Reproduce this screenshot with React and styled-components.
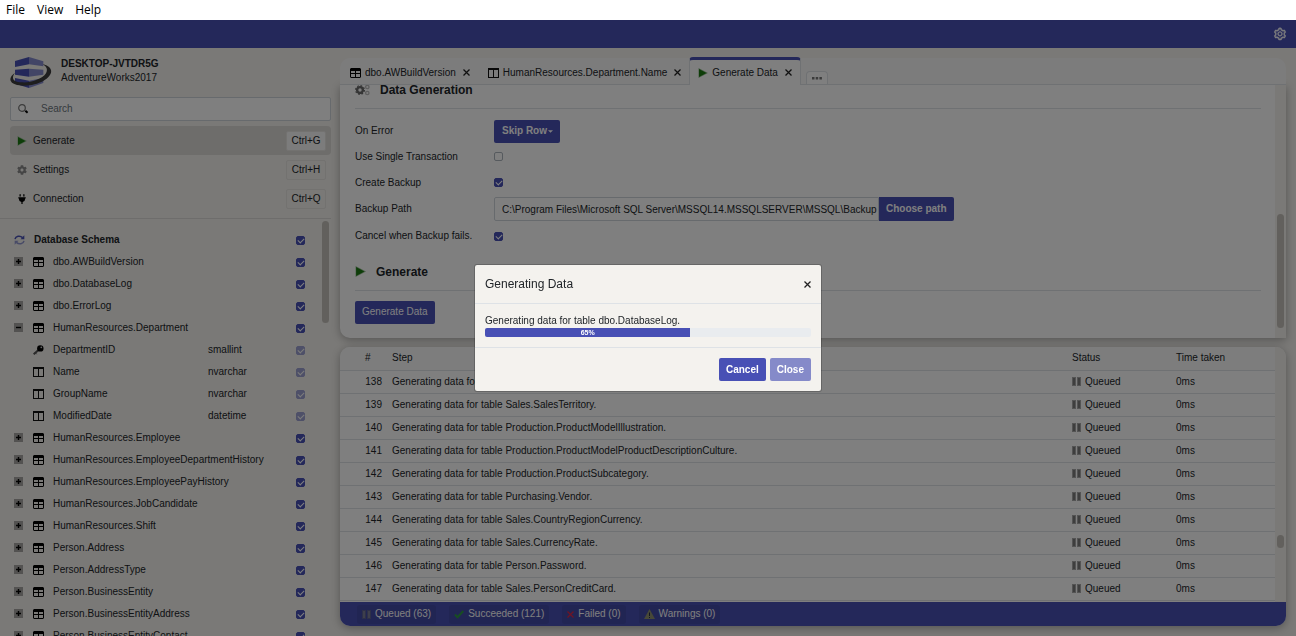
import React from 'react'
import styled, { createGlobalStyle } from 'styled-components'
import { AiOutlineSetting } from 'react-icons/ai'
import { FaCog, FaPlug } from 'react-icons/fa'

const tables = [
    { name: 'dbo.AWBuildVersion' },
    { name: 'dbo.DatabaseLog' },
    { name: 'dbo.ErrorLog' },
    {
        name: 'HumanResources.Department',
        columns: [
            { name: 'DepartmentID', type: 'smallint', primary: true },
            { name: 'Name', type: 'nvarchar' },
            { name: 'GroupName', type: 'nvarchar' },
            { name: 'ModifiedDate', type: 'datetime' },
        ],
    },
    { name: 'HumanResources.Employee' },
    { name: 'HumanResources.EmployeeDepartmentHistory' },
    { name: 'HumanResources.EmployeePayHistory' },
    { name: 'HumanResources.JobCandidate' },
    { name: 'HumanResources.Shift' },
    { name: 'Person.Address' },
    { name: 'Person.AddressType' },
    { name: 'Person.BusinessEntity' },
    { name: 'Person.BusinessEntityAddress' },
    { name: 'Person.BusinessEntityContact' },
]

const steps = [
    { id: 138, table: 'Sales.SpecialOffer' },
    { id: 139, table: 'Sales.SalesTerritory' },
    { id: 140, table: 'Production.ProductModelIllustration' },
    { id: 141, table: 'Production.ProductModelProductDescriptionCulture' },
    { id: 142, table: 'Production.ProductSubcategory' },
    { id: 143, table: 'Purchasing.Vendor' },
    { id: 144, table: 'Sales.CountryRegionCurrency' },
    { id: 145, table: 'Sales.CurrencyRate' },
    { id: 146, table: 'Person.Password' },
    { id: 147, table: 'Sales.PersonCreditCard' },
]

const progress = { label: '65%', filled: 63 }

function Logo() {
    return (
        <svg width="42" height="33" viewBox="0 0 126 99">
            <path fill="#4850b5" d="M15 15 57 3v22L15 33zM15 41l42-3v24l-42-6zM15 66l42 8v22L15 83z" />
            <path fill="#858bcc" d="M57 3l43 13v15L57 25zM57 38l43 3v15l-43 6zM57 74l43-8v15L57 96z" />
            <path
                fill="#3c3c3c"
                d="M15 50C-8 66-4 88 38 89 90 90 128 62 123 43 121 33 109 27 98 25c12 7 16 14 10 27C97 70 60 81 36 79 8 78 3 66 15 50z"
            />
        </svg>
    )
}

function TableIcon() {
    return (
        <svg width="11" height="10" viewBox="0 0 11 10">
            <path fill="#000" fillRule="evenodd" d="M1 0h9l1 1v8l-1 1H1L0 9V1zM1 3v2h4V3zM6 3v2h4V3zM1 6v3h4V6zM6 6v3h4V6z" />
        </svg>
    )
}

function ColumnIcon() {
    return (
        <svg width="11" height="10" viewBox="0 0 11 10">
            <path fill="#111" fillRule="evenodd" d="M0 0h11v10H0zM1 2v7h4V2zM6 2v7h4V2z" />
        </svg>
    )
}

function KeyIcon() {
    return (
        <svg width="11" height="10" viewBox="0 0 11 10">
            <path stroke="#555" strokeWidth="2" d="M.7 9.3 6 4.5" />
            <path stroke="#555" strokeWidth="1" d="M2 7.5l1.6 1.7" />
            <circle cx="7.3" cy="3.4" r="3.2" fill="#000" />
            <circle cx="8.3" cy="2.3" r=".9" fill="#ccc" />
        </svg>
    )
}

function PlayIcon({ size = 10 }) {
    return (
        <svg width={size} height={size} viewBox="0 0 10 10">
            <path fill="#9bbf98" d="M.5 0 10 5 .5 10z" />
            <path fill="#1c7a12" d="M1 1 8.6 5 1 9z" />
        </svg>
    )
}

function PauseIcon({ color = '#a8a8a8', inner = '#7c7c7c' }) {
    return (
        <svg width="9" height="9" viewBox="0 0 9 9">
            <path fill={color} d="M0 0h4v9H0zM5 0h4v9H5z" />
            <path fill={inner} d="M1 1h2v7H1zM6 1h2v7H6z" />
        </svg>
    )
}

function CrossIcon({ size = 7, color = '#222' }) {
    return (
        <svg width={size} height={size} viewBox="0 0 7 7">
            <path stroke={color} strokeWidth="1.3" d="M.5.5l6 6M6.5.5l-6 6" />
        </svg>
    )
}

function ToggleIcon({ open }) {
    return (
        <svg width="10" height="10" viewBox="0 0 10 10">
            <path fill="#a6a5a2" d="M0 0h9v9H0z" />
            <path stroke="#000" strokeWidth="1.4" d={open ? 'M2 4.5h5' : 'M2 4.5h5M4.5 2v5'} />
        </svg>
    )
}

function SearchIcon() {
    return (
        <svg width="11" height="10" viewBox="0 0 11 10" fill="none">
            <circle cx="4" cy="4" r="3.3" stroke="#777" strokeWidth="1.2" />
            <path stroke="#777" strokeWidth="1" d="M6.3 6.2l1.2 1" />
            <path stroke="#000" strokeWidth="2" d="M7.4 6.8l2.2 2" />
        </svg>
    )
}

function RefreshIcon() {
    return (
        <svg width="11" height="10" viewBox="0 0 11 10" fill="none">
            <path stroke="#4850b5" strokeWidth="1.5" d="M1 4.2C1.6 1 6 .2 8.6 2.6" />
            <path fill="#4850b5" d="M10.3.3v4H6.5z" />
            <path stroke="#9196cf" strokeWidth="1.5" d="M10 5.8C9.4 9 5 9.8 2.4 7.4" />
            <path fill="#9196cf" d="M.7 9.7v-4h3.8z" />
        </svg>
    )
}

function CogsIcon() {
    return (
        <svg width="15" height="12" viewBox="0 0 15 12" fill="none">
            <circle cx="5" cy="6" r="2.9" stroke="#6a6a6a" strokeWidth="2.4" />
            <circle cx="5" cy="6" r="4.4" stroke="#6a6a6a" strokeWidth="1.2" strokeDasharray="1.73 1.72" />
            <circle cx="12.3" cy="3" r="1.7" stroke="#bcbcbc" strokeWidth="1.3" />
            <circle cx="12.3" cy="9" r="1.7" stroke="#bcbcbc" strokeWidth="1.3" />
        </svg>
    )
}

function CheckIcon() {
    return (
        <svg width="10" height="9" viewBox="0 0 10 9" fill="none">
            <path stroke="#2f9a45" strokeWidth="2" d="M1 4.5l2.5 2.8L9.3 1" />
        </svg>
    )
}

function WarningIcon() {
    return (
        <svg width="11" height="10" viewBox="0 0 11 10">
            <path fill="#8e9070" d="M5.5 0 11 10H0z" />
            <path fill="#2b2d3d" d="M5 3.5h1V7H5zM5 8h1v1H5z" />
        </svg>
    )
}

function ScrollBar({ start, size, rest }) {
    return (
        <Track $start={start} $size={size} $rest={rest}>
            <Thumb />
        </Track>
    )
}

function Sidebar() {
    return (
        <Side>
            <Server>
                <Logo />
                <ServerText>
                    <b>DESKTOP-JVTDR5G</b>
                    <span>AdventureWorks2017</span>
                </ServerText>
            </Server>
            <SearchBox>
                <SearchIcon />
                <input type="text" placeholder="Search" aria-label="Search" />
            </SearchBox>
            <Menu>
                <MenuItem $active>
                    <PlayIcon />
                    Generate
                    <kbd>Ctrl+G</kbd>
                </MenuItem>
                <MenuItem>
                    <FaCog size={10} color="#8a8a8a" />
                    Settings
                    <kbd>Ctrl+H</kbd>
                </MenuItem>
                <MenuItem>
                    <FaPlug size={10} color="#000" />
                    Connection
                    <kbd>Ctrl+Q</kbd>
                </MenuItem>
            </Menu>
            <Schema>
                <Tree>
                    <TreeRow>
                        <RefreshIcon />
                        <b>Database Schema</b>
                        <CheckBox type="checkbox" defaultChecked aria-label="Database Schema" />
                    </TreeRow>
                    {tables.map((table) => (
                        <React.Fragment key={table.name}>
                            <TreeRow>
                                <Toggle aria-label={'Toggle ' + table.name}>
                                    <ToggleIcon open={!!table.columns} />
                                </Toggle>
                                <TableIcon />
                                <span>{table.name}</span>
                                <CheckBox type="checkbox" defaultChecked aria-label={table.name} />
                            </TreeRow>
                            {table.columns && table.columns.map((column) => (
                                <TreeRow key={column.name} $nested>
                                    {column.primary ? <KeyIcon /> : <ColumnIcon />}
                                    <ColumnName>{column.name}</ColumnName>
                                    <span>{column.type}</span>
                                    <CheckBox type="checkbox" defaultChecked disabled aria-label={column.name} />
                                </TreeRow>
                            ))}
                        </React.Fragment>
                    ))}
                </Tree>
                <ScrollBar start={2} size={102} rest={313} />
            </Schema>
        </Side>
    )
}

function GeneratePanel() {
    return (
        <TopPanel>
            <Tabs>
                <Tab>
                    <TableIcon />
                    dbo.AWBuildVersion
                    <CloseButton aria-label="Close tab"><CrossIcon /></CloseButton>
                </Tab>
                <Tab>
                    <ColumnIcon />
                    HumanResources.Department.Name
                    <CloseButton aria-label="Close tab"><CrossIcon /></CloseButton>
                </Tab>
                <Tab $active>
                    <PlayIcon />
                    Generate Data
                    <CloseButton aria-label="Close tab"><CrossIcon /></CloseButton>
                </Tab>
                <MoreTabs aria-label="More tabs">
                    <svg width="10" height="3" viewBox="0 0 10 3">
                        <path fill="#777" d="M0 0h2.5v2.5H0zM3.7 0h2.5v2.5H3.7zM7.4 0h2.5v2.5H7.4z" />
                    </svg>
                </MoreTabs>
            </Tabs>
            <PanelBody>
                <Form>
                    <Heading><CogsIcon />Data Generation</Heading>
                    <FormRow $size="button">
                        <label htmlFor="onError">On Error</label>
                        <SelectBox>
                            <select id="onError">
                                <option>Skip Row</option>
                            </select>
                            <svg width="5" height="3" viewBox="0 0 6 3"><path fill="#fff" d="M0 0h6L3 3z" /></svg>
                        </SelectBox>
                    </FormRow>
                    <FormRow>
                        <label htmlFor="transaction">Use Single Transaction</label>
                        <CheckBox id="transaction" type="checkbox" />
                    </FormRow>
                    <FormRow>
                        <label htmlFor="backup">Create Backup</label>
                        <CheckBox id="backup" type="checkbox" defaultChecked />
                    </FormRow>
                    <FormRow $size="field">
                        <label htmlFor="path">Backup Path</label>
                        <PathInput
                            id="path"
                            type="text"
                            defaultValue="C:\Program Files\Microsoft SQL Server\MSSQL14.MSSQLSERVER\MSSQL\Backup"
                        />
                        <PathButton>Choose path</PathButton>
                    </FormRow>
                    <FormRow $size="field">
                        <label htmlFor="cancelBackup">Cancel when Backup fails.</label>
                        <CheckBox id="cancelBackup" type="checkbox" defaultChecked />
                    </FormRow>
                    <Heading $spaced><PlayIcon size={11} />Generate</Heading>
                    <Button $plain>Generate Data</Button>
                </Form>
                <ScrollBar start={129} size={114} rest={10} />
            </PanelBody>
        </TopPanel>
    )
}

function StepsPanel() {
    return (
        <BottomPanel>
            <StepsBody>
                <TableWrap>
                    <StepTable>
                        <thead>
                            <tr>
                                <th>#</th>
                                <th>Step</th>
                                <th>Status</th>
                                <th>Time taken</th>
                            </tr>
                        </thead>
                        <tbody>
                            {steps.map((step) => (
                                <tr key={step.id}>
                                    <td>{step.id}</td>
                                    <td>Generating data for table {step.table}.</td>
                                    <td><Status><PauseIcon />Queued</Status></td>
                                    <td>0ms</td>
                                </tr>
                            ))}
                        </tbody>
                    </StepTable>
                </TableWrap>
                <ScrollBar start={188} size={13} rest={54} />
            </StepsBody>
            <Summary>
                <Badge><PauseIcon color="#5d6090" inner="#7c7e98" />Queued (63)</Badge>
                <Badge><CheckIcon />Succeeded (121)</Badge>
                <Badge><CrossIcon color="#dc2848" />Failed (0)</Badge>
                <Badge><WarningIcon />Warnings (0)</Badge>
            </Summary>
        </BottomPanel>
    )
}

function ProgressModal() {
    return (
        <Overlay>
            <Modal role="dialog" aria-labelledby="modalTitle">
                <ModalHeader>
                    <h2 id="modalTitle">Generating Data</h2>
                    <CloseButton aria-label="Close dialog"><CrossIcon /></CloseButton>
                </ModalHeader>
                <ModalBody>
                    <p>Generating data for table dbo.DatabaseLog.</p>
                    <Bar>
                        <BarFill style={{ width: progress.filled + '%' }}>{progress.label}</BarFill>
                    </Bar>
                </ModalBody>
                <ModalFooter>
                    <Button>Cancel</Button>
                    <Button disabled>Close</Button>
                </ModalFooter>
            </Modal>
        </Overlay>
    )
}

function App() {
    return (
        <Page>
            <GlobalStyle />
            <MenuBar>
                <button>File</button>
                <button>View</button>
                <button>Help</button>
            </MenuBar>
            <TopBar>
                <IconButton aria-label="Settings">
                    <AiOutlineSetting size={14} stroke="currentColor" strokeWidth={30} />
                </IconButton>
            </TopBar>
            <Content>
                <Sidebar />
                <Main>
                    <GeneratePanel />
                    <StepsPanel />
                </Main>
            </Content>
            <ProgressModal />
        </Page>
    )
}

export default App


const GlobalStyle = createGlobalStyle`
    * {
        box-sizing: border-box;
    }
    body {
        margin: 0;
        background: #f4f2ee;
        color: #212529;
        font-family: "Liberation Sans", Arial, sans-serif;
        font-size: 10px;
        line-height: 14px;
    }
    button, input, select {
        font: inherit;
        color: inherit;
    }
    svg {
        flex: none;
        display: block;
    }
`

const Page = styled.div`
    display: flex;
    flex-direction: column;
    height: 100vh;
    overflow: hidden;
`

const MenuBar = styled.div`
    display: flex;
    flex: none;
    height: 20px;
    background: #fff;

    button {
        padding: 0 6px;
        border: none;
        background: none;
        color: #000;
        font-family: "Open Sans", "Noto Sans", sans-serif;
        font-size: 12px;
    }
`

const TopBar = styled.div`
    display: flex;
    flex: none;
    align-items: center;
    justify-content: flex-end;
    height: 28px;
    padding: 0 9px;
    background: #4850b5;
`

const IconButton = styled.button`
    padding: 0;
    border: none;
    background: none;
    color: #fff;
`

const Content = styled.div`
    display: flex;
    flex: 1;
    min-height: 0;
`

const Side = styled.div`
    display: flex;
    flex-direction: column;
    flex: 0 0 331px;
`

const Server = styled.div`
    display: flex;
    gap: 9px;
    padding: 8px 10px;
`

const ServerText = styled.div`
    display: flex;
    flex-direction: column;
    padding-top: 1px;
`

const SearchBox = styled.label`
    display: flex;
    flex: none;
    align-items: center;
    gap: 12px;
    height: 24px;
    margin-left: 10px;
    padding: 0 7px;
    border: 1px solid #ced4da;
    border-radius: 2px;
    background: #fff;

    input {
        flex: 1;
        padding: 0;
        border: none;
        outline: none;
        background: none;
    }
    input::placeholder {
        color: #6c757d;
    }
`

const Menu = styled.div`
    display: flex;
    flex-direction: column;
    padding: 5px 0 5px 10px;
`

const MenuItem = styled.button`
    display: flex;
    align-items: center;
    gap: 6px;
    height: 29px;
    padding: 0 5px 0 7px;
    border: none;
    border-radius: 4px;
    background: ${(p) => (p.$active ? '#dcdad7' : 'none')};

    kbd {
        width: 40px;
        margin-left: auto;
        padding: 1px 0;
        border: 1px solid #e6e4e1;
        border-radius: 2px;
        background: ${(p) => (p.$active ? '#f8f8f8' : 'none')};
        font-family: inherit;
        line-height: 16px;
        text-align: center;
    }
`

const Schema = styled.div`
    display: flex;
    flex: 1;
    min-height: 0;
    border-top: 1px solid #dddbd8;
`

const Tree = styled.div`
    flex: 1;
    min-width: 0;
    overflow: hidden;
    padding: 10px 15px 0 14px;
`

const TreeRow = styled.div`
    display: flex;
    align-items: center;
    gap: 9px;
    height: 22px;
    padding-left: ${(p) => (p.$nested ? '19px' : '0')};
    white-space: nowrap;

    input {
        margin-left: auto;
    }
`

const Toggle = styled.button`
    width: 10px;
    padding: 0;
    border: none;
    background: none;
`

const ColumnName = styled.span`
    width: 146px;
`

const CheckBox = styled.input`
    display: grid;
    place-content: center;
    flex: none;
    width: 9px;
    height: 9px;
    margin: 0;
    appearance: none;
    border: 1px solid #adb5bd;
    border-radius: 2px;
    background: #fff;

    &:checked {
        border-color: #4850b5;
        background: #4850b5;
    }
    &:checked::after {
        content: "";
        width: 5px;
        height: 3px;
        margin-bottom: 1px;
        border: solid #fff;
        border-width: 0 0 1px 1px;
        transform: rotate(-45deg);
    }
    &:disabled {
        opacity: 0.5;
    }
`

const Main = styled.div`
    display: flex;
    flex-direction: column;
    flex: 1;
    gap: 9px;
    min-width: 0;
    padding: 10px 10px 10px 9px;
`

const TopPanel = styled.div`
    display: flex;
    flex-direction: column;
    flex: 1 1 0;
    min-height: 0;
`

const Tabs = styled.div`
    position: relative;
    z-index: 1;
    display: flex;
    flex: none;
    align-items: flex-end;
    height: 27px;
    border-bottom: 1px solid #dee2e6;
    border-radius: 10px 10px 0 0;
    background: #f9f9f9;
`

const Tab = styled.div`
    display: flex;
    align-items: center;
    gap: 4px;
    height: 28px;
    margin-bottom: -1px;
    padding: ${(p) => (p.$active ? '0 8px' : '3px 8px 0 10px')};
    border: ${(p) => (p.$active ? '1px solid #dee2e6' : 'none')};
    border-top: ${(p) => (p.$active ? '3px solid #4850b5' : 'none')};
    border-bottom: none;
    border-radius: 4px 4px 0 0;
    background: ${(p) => (p.$active ? '#fff' : 'none')};
    white-space: nowrap;

    button {
        margin-left: 3px;
    }
`

const CloseButton = styled.button`
    padding: 0;
    border: none;
    background: none;
`

const MoreTabs = styled.button`
    display: flex;
    align-items: center;
    justify-content: center;
    width: 22px;
    height: 13px;
    margin-left: 5px;
    padding: 0;
    border: 1px solid #dee2e6;
    border-bottom: none;
    border-radius: 4px 4px 0 0;
    background: #fff;
`

const PanelBody = styled.div`
    display: flex;
    flex: 1;
    min-height: 0;
    overflow: hidden;
    border-radius: 0 0 0 10px;
    background: #fff;
    box-shadow: 0 2px 8px rgba(0, 0, 0, 0.3);
`

/* scrolled to its end, so the first heading touches the tab strip */
const Form = styled.form`
    display: flex;
    flex-direction: column;
    flex: 1;
    justify-content: flex-end;
    align-items: flex-start;
    min-width: 0;
    padding: 0 14px 14px 15px;

    > * {
        flex: none;
    }
`

const Heading = styled.h3`
    display: flex;
    align-items: center;
    gap: 10px;
    width: 100%;
    margin: ${(p) => (p.$spaced ? '13px' : '0')} 0 10px;
    padding-bottom: 9px;
    border-bottom: 1px solid #dee2e6;
    font-size: 12px;
    line-height: 18px;
`

const rowHeights = { button: '25px', field: '27px' }

const FormRow = styled.div`
    display: flex;
    align-items: center;
    height: ${(p) => rowHeights[p.$size] || '26px'};

    label {
        width: 139px;
    }
`

const SelectBox = styled.div`
    display: grid;
    align-items: center;

    > * {
        grid-area: 1 / 1;
    }
    select {
        width: 66px;
        height: 23px;
        padding: 0 8px;
        appearance: none;
        border: none;
        border-radius: 2px;
        background: #4850b5;
        color: #fff;
        font-weight: bold;
    }
    svg {
        justify-self: end;
        margin-right: 7px;
        pointer-events: none;
    }
`

const PathInput = styled.input`
    width: 385px;
    height: 24px;
    padding: 0 1px 0 7px;
    border: 1px solid #ced4da;
    border-radius: 2px 0 0 2px;
    background: #fff;
`

const Button = styled.button`
    height: 23px;
    padding: 0 7px;
    border: none;
    border-radius: 2px;
    background: #4850b5;
    color: #fff;
    font-weight: ${(p) => (p.$plain ? 'normal' : 'bold')};

    &:disabled {
        background: #858ac9;
    }
`

const PathButton = styled(Button)`
    height: 24px;
    border-radius: 0 2px 2px 0;
`

const Track = styled.div`
    display: grid;
    flex: none;
    grid-template-rows: ${(p) => `${p.$start}fr ${p.$size}fr ${p.$rest}fr`};
    width: 11px;
    padding: 0 2px;
    background: #f4f2ee;
`

const Thumb = styled.div`
    grid-row: 2;
    border-radius: 4px;
    background: #c4c1ba;
`

const BottomPanel = styled.div`
    display: flex;
    flex-direction: column;
    flex: 1 1 0;
    min-height: 0;
    overflow: hidden;
    border-radius: 10px;
    background: #fff;
    box-shadow: 0 2px 8px rgba(0, 0, 0, 0.3);
`

const StepsBody = styled.div`
    display: flex;
    flex: 1;
    min-height: 0;
`

const TableWrap = styled.div`
    flex: 1;
    overflow: hidden;
`

const StepTable = styled.table`
    width: 100%;
    table-layout: fixed;
    border-collapse: separate;
    border-spacing: 0;

    th, td {
        height: 23px;
        padding: 0 5px;
        border-bottom: 1px solid #dee2e6;
        text-align: left;
    }
    th {
        height: 24px;
        background: #fafafa;
        font-weight: normal;
    }
    th:first-child {
        width: 47px;
        padding-left: 25px;
    }
    td:first-child {
        text-align: right;
    }
    th:nth-child(3) {
        width: 104px;
    }
    th:nth-child(4) {
        width: 104px;
    }
`

const Status = styled.span`
    display: flex;
    align-items: center;
    gap: 4px;
`

const Summary = styled.div`
    display: flex;
    flex: none;
    align-items: center;
    gap: 13px;
    height: 24px;
    padding: 0 17px;
    background: #4850b5;
    color: #fff;
`

const Badge = styled.span`
    display: flex;
    align-items: center;
    gap: 4px;
    height: 19px;
    padding: 0 5px;
    border-radius: 3px;
    background: #434aa6;
`

const Overlay = styled.div`
    position: fixed;
    z-index: 2;
    inset: 20px 0 0;
    display: grid;
    place-items: center;
    background: rgba(0, 0, 0, 0.5);
`

const Modal = styled.div`
    width: 348px;
    max-width: 90%;
    border: 1px solid rgba(0, 0, 0, 0.2);
    border-radius: 3px;
    background: #f4f2ee;
    background-clip: padding-box;
`

const ModalHeader = styled.div`
    display: flex;
    align-items: center;
    justify-content: space-between;
    padding: 10px;
    border-bottom: 1px solid #dee2e6;

    h2 {
        margin: 0;
        font-size: 12px;
        font-weight: normal;
        line-height: 18px;
    }
`

const ModalBody = styled.div`
    padding: 10px;

    p {
        margin: 0;
    }
`

const Bar = styled.div`
    overflow: hidden;
    height: 9px;
    border-radius: 2px;
    background: #e9ecef;
`

const BarFill = styled.div`
    height: 100%;
    background: #4850b5;
    color: #fff;
    font-size: 7px;
    font-weight: bold;
    line-height: 9px;
    text-align: center;
`

const ModalFooter = styled.div`
    display: flex;
    justify-content: flex-end;
    gap: 4px;
    padding: 10px;
    border-top: 1px solid #dee2e6;
`
